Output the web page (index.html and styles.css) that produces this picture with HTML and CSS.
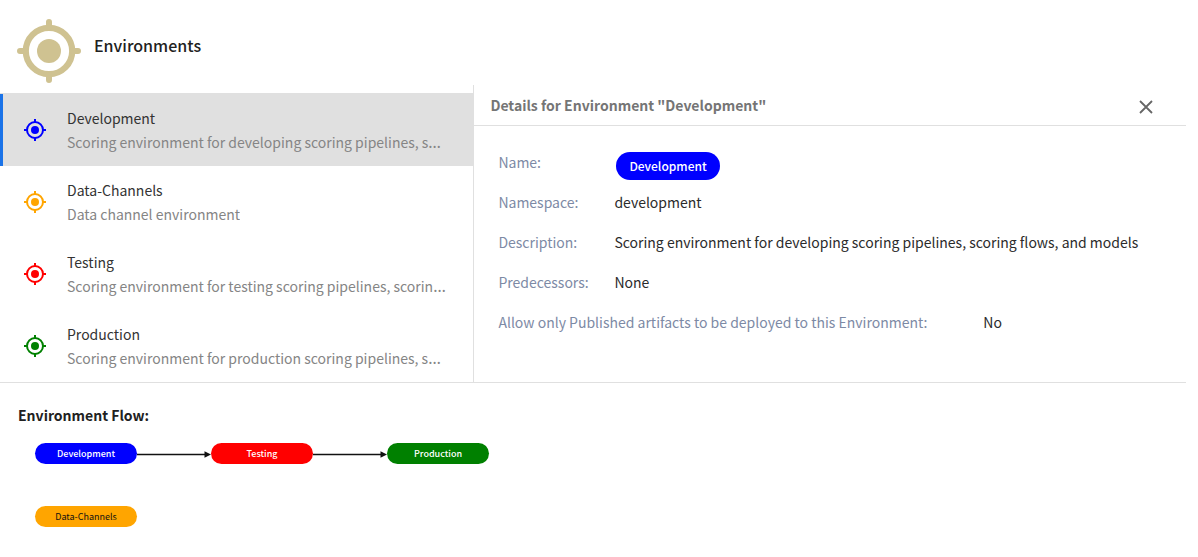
FILE: index.html
```html
<!DOCTYPE html>
<html lang="en">
<head>
<meta charset="utf-8">
<meta name="viewport" content="width=device-width, initial-scale=1">
<title>Environments</title>
<link rel="stylesheet" href="styles.css">
</head>
<body>
<svg class="sprite" aria-hidden="true">
  <symbol id="target" viewBox="0 0 24 24">
    <circle cx="12" cy="12" r="4" fill="currentColor"/>
    <circle cx="12" cy="12" r="8" fill="none" stroke="currentColor" stroke-width="2"/>
    <path d="M12 1v3M12 20v3M1 12h3M20 12h3" fill="none" stroke="currentColor" stroke-width="2"/>
  </symbol>
  <symbol id="arrow" viewBox="0 0 74 10">
    <path d="M0 5.5H70" fill="none" stroke="#111" stroke-width="1.4"/>
    <path d="M67.500 2.200L74 5.500L67.500 8.800Z" fill="#111"/>
  </symbol>
</svg>
<main class="page">
  <header class="header">
    <svg class="header-icon" viewBox="0 0 64 64" aria-hidden="true">
      <circle cx="32" cy="32" r="12" fill="currentColor"/>
      <circle cx="32" cy="32" r="23.200" fill="none" stroke="currentColor" stroke-width="6.200"/>
      <path d="M32 3v5M32 56v5M3 32h5M56 32h5" fill="none" stroke="currentColor" stroke-width="6" stroke-linecap="round"/>
    </svg>
    <h1 class="title">Environments</h1>
  </header>
  <div class="panels">
    <nav class="list">
      <button class="item selected" type="button">
        <svg class="item-icon blue"><use href="#target"/></svg>
        <span class="item-text"><span class="item-name">Development</span><span class="item-desc"><span class="desc-text">Scoring environment for developing scoring pipelines, scoring flows, and models</span></span></span>
      </button>
      <button class="item" type="button">
        <svg class="item-icon orange"><use href="#target"/></svg>
        <span class="item-text"><span class="item-name">Data-Channels</span><span class="item-desc"><span class="desc-text">Data channel environment</span></span></span>
      </button>
      <button class="item" type="button">
        <svg class="item-icon red"><use href="#target"/></svg>
        <span class="item-text"><span class="item-name">Testing</span><span class="item-desc"><span class="desc-text">Scoring environment for testing scoring pipelines, scoring flows, and models</span></span></span>
      </button>
      <button class="item" type="button">
        <svg class="item-icon green"><use href="#target"/></svg>
        <span class="item-text"><span class="item-name">Production</span><span class="item-desc"><span class="desc-text">Scoring environment for production scoring pipelines, scoring flows, and models</span></span></span>
      </button>
    </nav>
    <section class="details">
      <div class="details-head">
        <h2 class="details-title">Details for Environment "Development"</h2>
        <button class="close" type="button" aria-label="Close">
          <svg class="close-icon" viewBox="0 0 14 14"><path d="M1 1L13 13M13 1L1 13" fill="none" stroke="currentColor" stroke-width="1.800"/></svg>
        </button>
      </div>
      <dl class="fields">
        <div class="field"><dt>Name:</dt><dd><span class="chip">Development</span></dd></div>
        <div class="field"><dt>Namespace:</dt><dd>development</dd></div>
        <div class="field"><dt>Description:</dt><dd>Scoring environment for developing scoring pipelines, scoring flows, and models</dd></div>
        <div class="field"><dt>Predecessors:</dt><dd>None</dd></div>
        <div class="field wide"><dt>Allow only Published artifacts to be deployed to this Environment:</dt><dd>No</dd></div>
      </dl>
    </section>
  </div>
  <section class="flow">
    <h2 class="flow-title">Environment Flow:</h2>
    <div class="flow-rows">
      <div class="flow-row">
        <span class="node node-blue">Development</span>
        <svg class="arrow"><use href="#arrow"/></svg>
        <span class="node node-red">Testing</span>
        <svg class="arrow"><use href="#arrow"/></svg>
        <span class="node node-green">Production</span>
      </div>
      <div class="flow-row">
        <span class="node node-orange">Data-Channels</span>
      </div>
    </div>
  </section>
</main>
</body>
</html>
```
FILE: styles.css
```css
* { box-sizing: border-box; }
body {
  margin: 0;
  background: #fff;
  color: #2b2b2b;
  font: 14px/24px "Noto Sans CJK SC", "Noto Sans", sans-serif;
}
h1, h2, dl, dd { margin: 0; }
button { border: 0; padding: 0; background: none; color: inherit; font: inherit; text-align: left; cursor: pointer; }
.sprite { position: absolute; width: 0; height: 0; }
.page { margin-right: 12px; }

.header { display: flex; align-items: center; gap: 13px; padding: 19px 17px 2px; }
.header-icon { width: 64px; height: 64px; color: #cfc291; }
.title { font-size: 16px; line-height: 24px; font-weight: 500; padding-bottom: 12px; color: #212121; }

.panels { display: flex; border-bottom: 1px solid #e0e0e0; }
.list { flex: 0 0 40%; min-width: 0; padding-top: 9px; border-right: 1px solid #e0e0e0; }
.item { display: flex; align-items: center; gap: 20px; width: 100%; height: 72px; padding: 0 26px 0 20px; border-left: 3px solid transparent; }
.item.selected { background: #e0e0e0; border-left-color: #1a73e8; box-shadow: 0 -1px #e0e0e0; }
.item-icon { flex: none; width: 24px; height: 24px; }
.blue { color: #00f; }
.orange { color: orange; }
.red { color: red; }
.green { color: green; }
.item-text { display: flex; flex-direction: column; min-width: 0; }
.item-name { color: #333; }
/* The block's own font draws the ellipsis on the baseline. */
.item-desc { height: 24px; color: #858585; overflow: hidden; white-space: nowrap; text-overflow: ellipsis; font-family: "Noto Sans", sans-serif; font-size: 16px; }
.desc-text { font-family: "Noto Sans CJK SC", "Noto Sans", sans-serif; font-size: 14px; }

.details { flex: 1; min-width: 0; }
.details-head { display: flex; align-items: center; justify-content: space-between; height: 41px; padding: 0 33px 0 16px; border-bottom: 1px solid #e0e0e0; }
.details-title { font-size: 14px; line-height: 24px; font-weight: 700; color: #757575; }
.close { display: flex; color: #666; padding-top: 4px; }
.close-icon { width: 14px; height: 14px; }
.fields { padding: 16px 24px; }
.field { display: grid; grid-template-columns: 104px 1fr; column-gap: 12px; align-items: center; min-height: 40px; }
.field.wide { grid-template-columns: auto 1fr; column-gap: 56px; }
dt { color: #7d8aa5; white-space: nowrap; }
.chip { display: block; width: fit-content; margin: 8px 0 0 2px; padding: 0 13px; border-radius: 14px; background: #00f; color: #fff; font-size: 12px; line-height: 28px; font-weight: 500; }

.flow { padding: 20px 18px; }
.flow-title { font-size: 14px; line-height: 24px; font-weight: 700; color: #212121; }
.flow-rows { display: flex; flex-direction: column; gap: 42px; padding: 16px 17px; }
.flow-row { display: flex; align-items: center; }
.node { width: 102px; border-radius: 11px; font-size: 9px; line-height: 21px; text-align: center; }
.node-blue { background: #00f; color: #fff; font-weight: 500; }
.node-red { background: red; color: #fff; font-weight: 500; }
.node-green { background: green; color: #fff; font-weight: 500; }
.node-orange { background: orange; color: #111; }
.arrow { width: 74px; height: 10px; }
```
